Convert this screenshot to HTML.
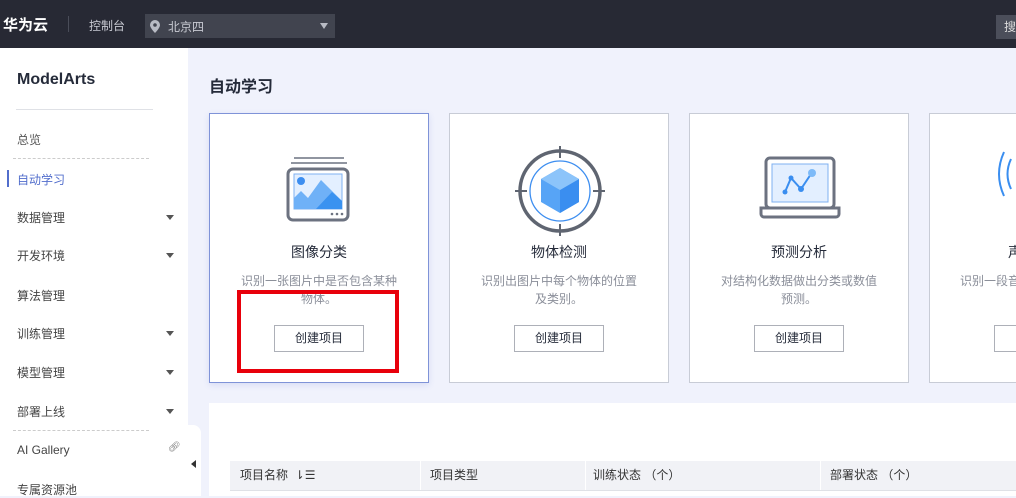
<!DOCTYPE html>
<html><head><meta charset="utf-8"><style>
*{margin:0;padding:0;box-sizing:border-box}
body{width:1016px;height:496px;overflow:hidden;background:#f0f2fc;font-family:"Liberation Sans","Noto Sans CJK SC",sans-serif;position:relative}
.top{position:absolute;left:0;top:0;width:1016px;height:48px;background:#272934}
.abs{position:absolute}
.side{position:absolute;left:0;top:48px;width:188px;height:448px;background:#fff}
.si{position:absolute;left:17px;font-size:12px;color:#444}
.arr{position:absolute;left:166px;width:0;height:0;border-left:4px solid transparent;border-right:4px solid transparent;border-top:5px solid #555}
.card{position:absolute;top:113px;width:220px;height:270px;background:#fff;border:1px solid #c8ccd6}
.card .t{position:absolute;top:128px;width:100%;text-align:center;font-size:14px;color:#252b3a}
.card .d{position:absolute;top:158px;left:26px;right:26px;text-align:center;font-size:12px;line-height:18px;color:#8a8e99}
.card .b{position:absolute;top:211px;left:64px;width:90px;height:27px;border:1px solid #adb0b8;font-size:12px;color:#252b3a;text-align:center;line-height:25px}
.th{position:absolute;top:461px;height:29px;font-size:12px;color:#333;line-height:29px}
</style></head><body>
<div class="top">
 <div class="abs" style="left:3px;top:14px;color:#fff;font-size:15px;font-weight:bold">华为云</div>
 <div class="abs" style="left:68px;top:16px;width:1px;height:16px;background:#4a4d59"></div>
 <div class="abs" style="left:89px;top:17px;color:#c8cad2;font-size:12px">控制台</div>
 <div class="abs" style="left:145px;top:14px;width:190px;height:24px;background:#41444f"></div>
 <svg class="abs" style="left:150px;top:20px" width="10" height="13" viewBox="0 0 10 13"><path d="M5 0a5 5 0 0 0-5 5c0 3 5 8 5 8s5-5 5-8a5 5 0 0 0-5-5z" fill="#b8bbc4"/><circle cx="5" cy="5" r="1.8" fill="#41444f"/></svg>
 <div class="abs" style="left:168px;top:18px;color:#c8cad2;font-size:12px">北京四</div>
 <div class="abs" style="left:320px;top:23px;border-left:4px solid transparent;border-right:4px solid transparent;border-top:6px solid #b8bbc4"></div>
 <div class="abs" style="left:996px;top:15px;width:22px;height:24px;background:#4b4e5a;color:#ddd;font-size:12px;line-height:24px;padding-left:8px">搜</div>
</div>
<div class="side">
 <div class="abs" style="left:17px;top:23px;font-size:16px;color:#252b3a;font-weight:bold">ModelArts</div>
 <div class="abs" style="left:16px;top:61px;width:137px;height:1px;background:#dfe1e6"></div>
 <div class="si" style="top:83px;color:#555">总览</div>
 <div class="abs" style="left:13px;top:110px;width:136px;border-top:1px dashed #ccc"></div>
 <div class="abs" style="left:7px;top:122px;width:2px;height:17px;background:#526ecc"></div>
 <div class="si" style="top:123px;color:#526ecc">自动学习</div>
 <div class="si" style="top:161px">数据管理</div><div class="arr" style="top:167px"></div>
 <div class="si" style="top:199px">开发环境</div><div class="arr" style="top:205px"></div>
 <div class="si" style="top:239px">算法管理</div>
 <div class="si" style="top:277px">训练管理</div><div class="arr" style="top:283px"></div>
 <div class="si" style="top:316px">模型管理</div><div class="arr" style="top:322px"></div>
 <div class="si" style="top:355px">部署上线</div><div class="arr" style="top:361px"></div>
 <div class="abs" style="left:13px;top:382px;width:136px;border-top:1px dashed #ccc"></div>
 <div class="si" style="top:395px">AI Gallery</div>
 <div class="abs" style="left:168px;top:394px;font-size:10px;color:#777">&#x1F517;&#xFE0E;</div>
 <div class="si" style="top:433px">专属资源池</div>
</div>
<div class="abs" style="left:186px;top:425px;width:15px;height:71px;background:#fff;border-radius:0 8px 0 0"></div>
<div class="abs" style="left:191px;top:460px;border-top:4px solid transparent;border-bottom:4px solid transparent;border-right:5px solid #333"></div>
<div class="abs" style="left:209px;top:73px;font-size:16px;font-weight:bold;color:#252b3a">自动学习</div>

<div class="card" style="left:209px;border-color:#7f93d8;box-shadow:0 2px 6px rgba(80,100,200,.15)">
 <svg class="abs" style="left:76px;top:42px" width="64" height="66" viewBox="0 0 64 66"><line x1="8" y1="2" x2="58" y2="2" stroke="#6c7280" stroke-width="1.5"/><line x1="5" y1="7" x2="61" y2="7" stroke="#6c7280" stroke-width="1.5"/><rect x="2" y="13" width="60" height="51" rx="5" fill="#fff" stroke="#6c7280" stroke-width="3"/><rect x="8" y="18" width="48" height="35" fill="#e3efff" stroke="#7fb0f0"/><circle cx="15" cy="25" r="4" fill="#3d8ef0"/><path d="M8 53L8 42L15 35L22 42L35 24L56 45L56 53Z" fill="#6fb1f7"/><path d="M30 53L46 36L56 45L56 53Z" fill="#3a92f0"/><circle cx="46" cy="58" r="1.3" fill="#6c7280"/><circle cx="51" cy="58" r="1.3" fill="#6c7280"/><circle cx="56" cy="58" r="1.3" fill="#6c7280"/></svg>
 <div class="t">图像分类</div><div class="d">识别一张图片中是否包含某种物体。</div><div class="b">创建项目</div>
</div>
<div class="card" style="left:449px">
 <svg class="abs" style="left:65px;top:32px" width="90" height="90" viewBox="0 0 90 90"><circle cx="45" cy="45" r="40" fill="none" stroke="#5f6571" stroke-width="3.5"/><circle cx="45" cy="45" r="30" fill="none" stroke="#3d8ef0" stroke-width="1.3"/><path d="M45 0v12M45 78v12M0 45h12M78 45h12" stroke="#5f6571" stroke-width="2"/><path d="M45 22L64 33V56L45 67L26 56V33Z" fill="#57a4f6"/><path d="M45 44L64 33V56L45 67Z" fill="#3a8ef0"/><path d="M45 22L64 33L45 44L26 33Z" fill="#8cc4fa"/></svg>
 <div class="t">物体检测</div><div class="d">识别出图片中每个物体的位置及类别。</div><div class="b">创建项目</div>
</div>
<div class="card" style="left:689px">
 <svg class="abs" style="left:69px;top:42px" width="82" height="64" viewBox="0 0 82 64"><rect x="7" y="2" width="68" height="50" rx="4" fill="#fff" stroke="#6c7280" stroke-width="3"/><rect x="13" y="8" width="56" height="38" fill="#e3efff" stroke="#7fb0f0"/><path d="M2 52h78v6a3 3 0 0 1-3 3H5a3 3 0 0 1-3-3z" fill="#fff" stroke="#6c7280" stroke-width="3"/><path d="M26 36L32 22L42 33L52 18" fill="none" stroke="#3a8ef0" stroke-width="2"/><circle cx="26" cy="36" r="2.5" fill="#3a8ef0"/><circle cx="32" cy="22" r="2.5" fill="#3a8ef0"/><circle cx="42" cy="33" r="3" fill="#3a8ef0"/><circle cx="53" cy="17" r="4" fill="#7dbaf8"/></svg>
 <div class="t">预测分析</div><div class="d">对结构化数据做出分类或数值预测。</div><div class="b">创建项目</div>
</div>
<div class="card" style="left:929px">
 <svg class="abs" style="left:65px;top:35px" width="30" height="50" viewBox="0 0 30 50"><path d="M9 3Q-1 25 9 47" fill="none" stroke="#3a8ef0" stroke-width="2"/><path d="M16 10Q9 25 16 40" fill="none" stroke="#3a8ef0" stroke-width="2"/></svg>
 <div class="t" style="text-align:left;left:78px">声</div><div class="d" style="left:30px;right:auto;white-space:nowrap;text-align:left">识别一段音频</div><div class="b" style="left:64px">创</div>
</div>
<div class="abs" style="left:237px;top:290px;width:162px;height:83px;border:4px solid #e8000b"></div>

<div class="abs" style="left:209px;top:403px;width:807px;height:93px;background:#fff"></div>
<div class="abs" style="left:230px;top:461px;width:786px;height:29px;background:#f1f2f6"></div>
<div class="abs" style="left:230px;top:490px;width:786px;height:1px;background:#dfe1e6"></div>
<div class="abs" style="left:420px;top:461px;width:1px;height:29px;background:#fff"></div>
<div class="abs" style="left:585px;top:461px;width:1px;height:29px;background:#fff"></div>
<div class="abs" style="left:820px;top:461px;width:1px;height:29px;background:#fff"></div>
<div class="th" style="left:240px">项目名称 &nbsp;⇂☰</div>
<div class="th" style="left:430px">项目类型</div>
<div class="th" style="left:593px">训练状态 （个）</div>
<div class="th" style="left:830px">部署状态 （个）</div>
</body></html>
